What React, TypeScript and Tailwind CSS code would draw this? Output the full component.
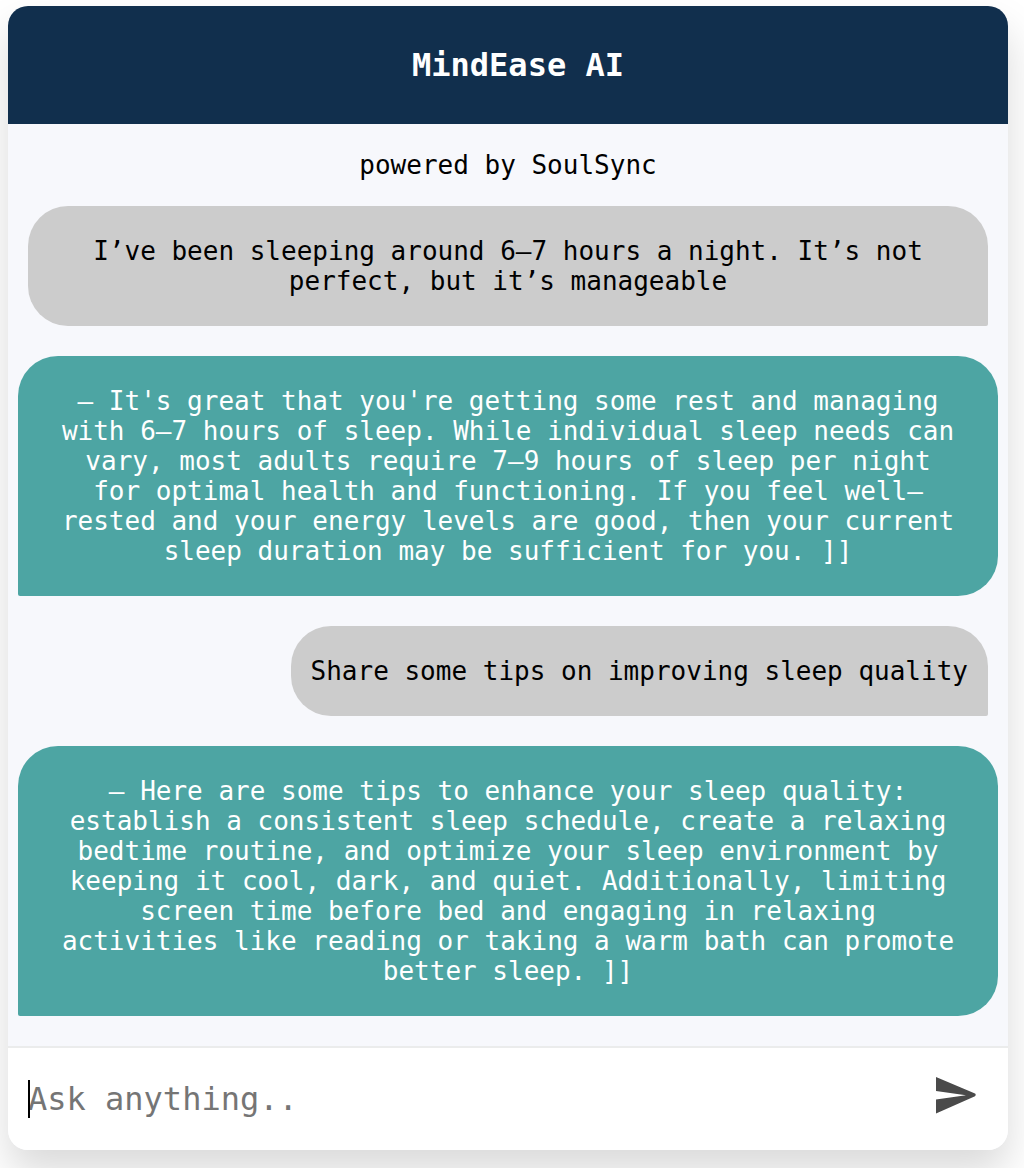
import { useState } from "react";

type Message = { from: "user" | "bot"; text: string };

const messages: Message[] = [
  {
    from: "user",
    text: "I’ve been sleeping around 6–7 hours a night. It’s not perfect, but it’s manageable",
  },
  {
    from: "bot",
    text: "– It's great that you're getting some rest and managing with 6–7 hours of sleep. While individual sleep needs can vary, most adults require 7–9 hours of sleep per night for optimal health and functioning. If you feel well–rested and your energy levels are good, then your current sleep duration may be sufficient for you. ]]",
  },
  { from: "user", text: "Share some tips on improving sleep quality" },
  {
    from: "bot",
    text: "– Here are some tips to enhance your sleep quality: establish a consistent sleep schedule, create a relaxing bedtime routine, and optimize your sleep environment by keeping it cool, dark, and quiet. Additionally, limiting screen time before bed and engaging in relaxing activities like reading or taking a warm bath can promote better sleep. ]]",
  },
];

function Bubble({ from, text }: Message) {
  if (from === "user") {
    return (
      <p className="mx-5 self-end rounded-[40px] rounded-br-[2px] bg-[#cccccc] px-5 py-[30px] text-center text-black">
        {text}
      </p>
    );
  }
  return (
    <p className="mx-[10px] self-start rounded-[40px] rounded-bl-[2px] bg-[#4da5a3] px-10 py-[30px] text-center text-white">
      {text}
    </p>
  );
}

export default function App() {
  const [draft, setDraft] = useState("");
  return (
    <div className="overflow-hidden bg-white pt-[6px] pr-4 pb-[18px] pl-2 font-['DejaVu_Sans_Mono',monospace] text-[26px] leading-[30px]">
      <main className="overflow-hidden rounded-[20px] bg-[#f7f8fc] shadow-[0_22px_40px_rgba(0,0,0,0.15)]">
        <header className="bg-[#112f4d] py-10 pl-5 text-center text-white">
          <h1 className="text-[32px] leading-[38px] font-bold">MindEase AI</h1>
        </header>
        <p className="py-[26px] text-center text-black">powered by SoulSync</p>
        <section className="flex flex-col gap-[30px] pb-[30px]" aria-label="Conversation">
          {messages.map((m) => (
            <Bubble key={m.text} from={m.from} text={m.text} />
          ))}
        </section>
        <form
          className="flex items-start border-t-2 border-[#ebecec] bg-white py-8 pr-8 pl-5"
          onSubmit={(e) => e.preventDefault()}
        >
          <div className="relative flex min-w-0 flex-1">
            <input
              type="text"
              aria-label="Message"
              placeholder="Ask anything.."
              value={draft}
              onChange={(e) => setDraft(e.target.value)}
              className="h-[38px] w-full bg-transparent text-[32px] leading-[38px] text-black outline-none placeholder:text-[#757575]"
            />
            {draft === "" && (
              <span className="pointer-events-none absolute inset-y-0 left-0 w-[2px] bg-black" />
            )}
          </div>
          <button type="submit" aria-label="Send" className="-mt-1 shrink-0">
            <svg width="40" height="38" viewBox="0 0 40 38" fill="#4a4a4a">
              <path d="M0 1 39 17.6Q40.4 18.8 39 20.2L0 37.6V23.5L30 19.3 0 15Z" />
            </svg>
          </button>
        </form>
      </main>
    </div>
  );
}
